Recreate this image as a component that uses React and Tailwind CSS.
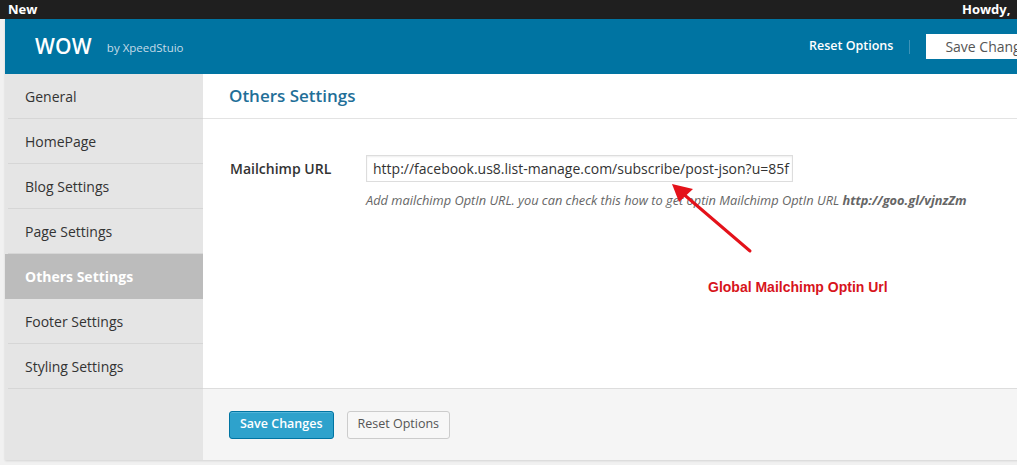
import React from 'react';

const menu = [
  'General',
  'HomePage',
  'Blog Settings',
  'Page Settings',
  'Others Settings',
  'Footer Settings',
  'Styling Settings',
];

const font = { fontFamily: '"Open Sans", "Noto Sans", sans-serif' };

export default function App() {
  return (
    <div className="relative h-[465px] w-full overflow-hidden bg-[#f1f1f1]" style={font}>
      {/* admin bar */}
      <div className="flex h-[19px] items-center justify-between bg-[#1f1f1f] px-[8px] text-[13px] font-bold leading-none text-white">
        <span>New</span>
        <span className="w-[47px]">Howdy,</span>
      </div>

      <div className="pl-[5px]">
        <div className="w-[1120px] shadow-[0_1px_2px_rgba(0,0,0,0.12)]">
          {/* header */}
          <div className="flex h-[55px] items-center bg-[#0074a2] pl-[30px] text-white">
            <span className="text-[21px] font-semibold tracking-[0.2px]">WOW</span>
            <span className="ml-[15px] mt-[3px] text-[11.5px] text-[#c5dbe8]">by XpeedStuio</span>
            <div className="ml-auto flex w-[316px] items-center">
              <span className="text-[12.5px] font-semibold">Reset Options</span>
              <span className="mx-[16px] h-[14px] w-px bg-[#3d93b8]" />
              <button className="h-[25px] w-[190px] bg-white pl-[19px] text-left text-[14px] text-[#555]">
                Save Changes
              </button>
            </div>
          </div>

          {/* body */}
          <div className="flex h-[386px]">
            <div className="w-[198px] bg-[#e5e5e5]">
              {menu.map((item) => {
                const active = item === 'Others Settings';
                return (
                  <div
                    key={item}
                    className={active ? 'h-[45px] bg-[#bcbcbc]' : 'h-[45px] bg-[#e5e5e5]'}
                  >
                    <div
                      className={
                        active
                          ? 'flex h-[45px] items-center pb-[1px] pl-[20px] text-[14px] font-bold text-white'
                          : 'ml-[3px] flex h-[45px] items-center border-b border-[#d6d6d6] pl-[17px] text-[14px] text-[#333]'
                      }
                    >
                      {item}
                    </div>
                  </div>
                );
              })}
            </div>

            <div className="relative flex flex-1 flex-col bg-white">
              <div className="flex h-[45px] items-center border-b border-[#e3e3e3] pl-[26px] text-[17px] font-semibold text-[#1f6f98]">
                Others Settings
              </div>

              <div className="flex-1 pl-[27px] pt-[36px]">
                <div className="flex">
                  <div className="flex h-[27px] w-[136px] items-center text-[14px] font-semibold text-[#333]">
                    Mailchimp URL
                  </div>
                  <div>
                    <div className="flex h-[27px] w-[427px] items-center border border-[#dddddd] pl-[6px] text-[14px] text-[#333] shadow-[inset_0_1px_2px_rgba(0,0,0,0.07)]">
                      http://facebook.us8.list-manage.com/subscribe/post-json?u=85f
                    </div>
                    <p className="mt-[9px] whitespace-nowrap text-[12.8px] italic text-[#666]">
                      Add mailchimp OptIn URL. you can check this how to get optin Mailchimp OptIn URL{' '}
                      <b>http://goo.gl/vjnzZm</b>
                    </p>
                  </div>
                </div>
              </div>

              <div className="flex h-[72px] items-center gap-[13px] border-t border-[#dddddd] bg-[#f5f5f5] pl-[26px]">
                <button className="h-[28px] rounded-[3px] border border-[#0074a2] bg-[#2ea2cc] px-[10px] text-[12.5px] font-semibold text-white shadow-[inset_0_1px_0_rgba(120,200,230,0.5)]">
                  Save Changes
                </button>
                <button className="h-[28px] rounded-[3px] border border-[#cccccc] bg-[#f7f7f7] px-[10px] text-[12.5px] text-[#555]">
                  Reset Options
                </button>
              </div>

              {/* annotation */}
              <svg className="absolute left-[464px] top-[104px]" width="90" height="80" viewBox="0 0 90 80">
                <line x1="83" y1="73" x2="14" y2="14" stroke="#e4121a" strokeWidth="3" strokeLinecap="round" />
                <polygon points="5,6 26,11 12,24" fill="#e4121a" />
              </svg>
              <div
                className="absolute left-[505px] top-[203px] text-[14px] font-bold text-[#d7141c]"
                style={{ fontFamily: '"Liberation Sans", Arial, sans-serif' }}
              >
                Global Mailchimp Optin Url
              </div>
            </div>
          </div>
        </div>
      </div>
    </div>
  );
}
